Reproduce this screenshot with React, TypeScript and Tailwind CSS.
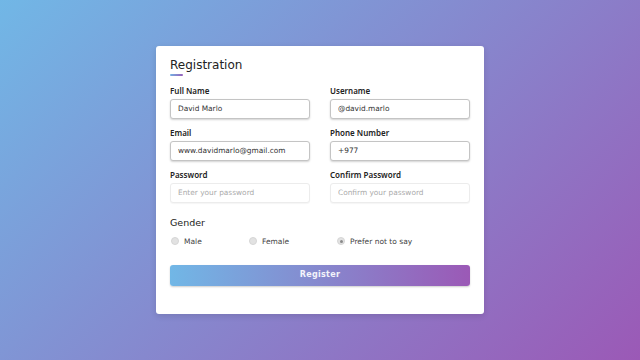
import React from 'react'

const font = { fontFamily: '"DejaVu Sans", "Noto Sans", sans-serif' }
const labelFont = { fontFamily: '"Noto Sans", "DejaVu Sans", sans-serif' }

function Field({ label, value, placeholder, filled = true }: { label: string; value?: string; placeholder?: string; filled?: boolean }) {
  return (
    <div className="flex flex-col">
      <label className="text-[8px] leading-[11px] font-semibold text-[#222]" style={labelFont}>
        {label}
      </label>
      <input
        readOnly
        value={value ?? ''}
        placeholder={placeholder}
        className={
          'mt-[3px] h-[20px] w-full rounded-[3px] bg-white px-[7px] text-[7.4px] text-[#333] outline-none placeholder:text-[#aaa] ' +
          (filled
            ? 'border border-[#c4c4c4] shadow-[0_1px_2px_rgba(0,0,0,0.18)]'
            : 'border border-[#ececec] shadow-[0_1px_1px_rgba(0,0,0,0.04)]')
        }
        style={font}
      />
    </div>
  )
}

function Radio({ label, checked = false, width }: { label: string; checked?: boolean; width: string }) {
  return (
    <div className={`flex items-center gap-[5px] ${width}`}>
      <span className="flex h-[8px] w-[8px] items-center justify-center rounded-full border border-[#d6d6d6] bg-[#e2e2e2]">
        {checked && <span className="h-[3px] w-[3px] rounded-full bg-[#8a8a8a]" />}
      </span>
      <span className="text-[7.5px] leading-[11px] text-[#444]">{label}</span>
    </div>
  )
}

export default function App() {
  return (
    <div
      className="flex h-[360px] w-[640px] items-center justify-center bg-[linear-gradient(135deg,#71b7e6,#9b59b6)]"
      style={font}
    >
      <div className="w-[328px] rounded-[3px] bg-white px-[14px] pt-[10px] pb-[28px] shadow-[0_2px_6px_rgba(0,0,0,0.12)]">
        <div className="flex flex-col">
          <h1 className="text-[12px] leading-[18px] font-medium text-[#222]">Registration</h1>
          <div className="h-[1.5px] w-[13px] rounded bg-[linear-gradient(135deg,#71b7e6,#9b59b6)]" />
        </div>

        <div className="mt-[9px] grid grid-cols-2 gap-x-[20px] gap-y-[8px]">
          <Field label="Full Name" value="David Marlo" />
          <Field label="Username" value="@david.marlo" />
          <Field label="Email" value="www.davidmarlo@gmail.com" />
          <Field label="Phone Number" value="+977" />
          <Field label="Password" placeholder="Enter your password" filled={false} />
          <Field label="Confirm Password" placeholder="Confirm your password" filled={false} />
        </div>

        <div className="mt-[13px] text-[9.5px] leading-[14px] font-medium text-[#222]">Gender</div>
        <div className="mt-[6px] flex h-[11px] items-center pl-[1px]">
          <Radio label="Male" width="w-[78px]" />
          <Radio label="Female" width="w-[88px]" />
          <Radio label="Prefer not to say" checked width="w-auto" />
        </div>

        <button
          className="mt-[18px] flex h-[21px] w-full items-center justify-center rounded-[3px] bg-[linear-gradient(90deg,#71b7e6,#9b59b6)] text-[8px] font-semibold tracking-[0.3px] text-white/90 shadow-[0_1px_2px_rgba(0,0,0,0.2)]"
          style={font}
        >
          Register
        </button>
      </div>
    </div>
  )
}
